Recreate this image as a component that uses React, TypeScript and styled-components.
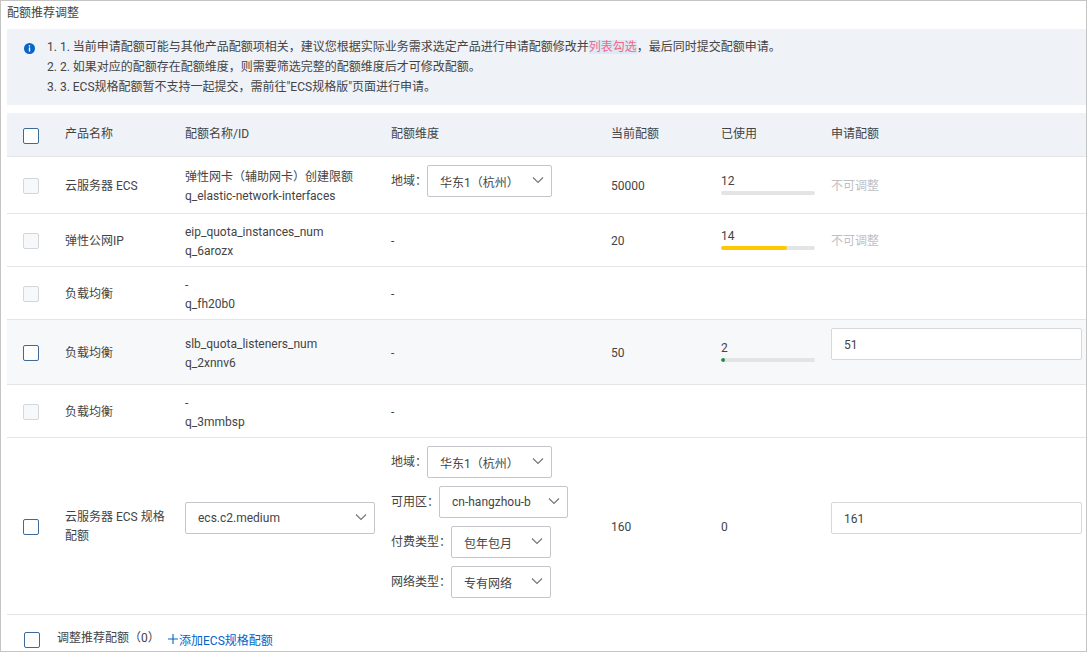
import React from "react";
import styled, { createGlobalStyle } from "styled-components";

const GlobalStyle = createGlobalStyle`
  html, body {
    margin: 0;
    padding: 0;
    background: #fff;
  }
  body {
    font-family: Roboto, "Noto Sans CJK SC", sans-serif;
    font-size: 12px;
    color: #444;
  }
`;

const Frame = styled.div`
  box-sizing: border-box;
  width: 1087px;
  height: 652px;
  border: 1px solid #c4c4c4;
  padding: 0 0 0 6px;
  overflow: hidden;
`;

const Title = styled.h2`
  margin: 0;
  height: 28px;
  line-height: 25px;
  font-size: 12px;
  font-weight: 400;
`;

const Notice = styled.div`
  display: flex;
  height: 76px;
  box-sizing: border-box;
  padding: 8px 0 0 17px;
  background: #eff2f7;
  gap: 12px;
`;

const InfoIcon = styled.svg`
  width: 11px;
  height: 11px;
  margin-top: 6px;
  flex: none;
`;

const NoticeList = styled.ol`
  margin: 0;
  padding: 0;
  list-style: none;
  line-height: 20px;
`;

const Highlight = styled.span`
  color: #f0678c;
  background: #dfe9f6;
`;

const Row = styled.div<{ $height: number; $head?: boolean; $hover?: boolean }>`
  display: grid;
  grid-template-columns: 58px 120px 206px 220px 110px 110px 1fr;
  align-items: center;
  box-sizing: border-box;
  height: ${(p) => p.$height}px;
  margin-top: ${(p) => (p.$head ? "8px" : "0")};
  border-bottom: 1px solid #e3e5e8;
  background: ${(p) => (p.$head ? "#eff2f7" : p.$hover ? "#f7f8fa" : "#fff")};
`;

const Check = styled.span<{ $disabled?: boolean }>`
  display: block;
  box-sizing: border-box;
  width: 16px;
  height: 16px;
  margin: 2px 0 0 16px;
  border-radius: 2px;
  border: 1px solid ${(p) => (p.$disabled ? "#d3d6da" : "#3f6a96")};
  background: ${(p) => (p.$disabled ? "#f7f8fa" : "#fff")};
`;

const HeadCell = styled.div`
  line-height: 19px;
`;

const Cell = styled.div`
  line-height: 19px;
  min-width: 0;
  padding-top: 2px;
`;

const ProductCell = styled(Cell)`
  padding-right: 16px;
`;

const NameCell = styled(Cell)`
  padding-top: 4px;
`;

const FormField = styled.div`
  margin-bottom: 16px;
`;

const DimList = styled.div`
  display: flex;
  flex-direction: column;
  gap: 8px;
  margin-bottom: 8px;
`;

const DimRow = styled.div`
  display: flex;
  align-items: center;
  white-space: nowrap;
`;

const DimLabel = styled.span`
  padding-bottom: 4px;
`;

const SelectBox = styled.div<{ $width: number }>`
  display: flex;
  align-items: center;
  justify-content: space-between;
  box-sizing: border-box;
  width: ${(p) => p.$width}px;
  height: 32px;
  padding: 0 7px 0 12px;
  background: #fff;
  border: 1px solid #c4c6cc;
  border-radius: 2px;
  white-space: nowrap;
`;

const Chevron = styled.svg`
  width: 12px;
  height: 8px;
  flex: none;
  margin-top: -3px;
`;

const UsedBlock = styled.div`
  margin-top: -1px;
`;

const UsedValue = styled.div`
  line-height: 15px;
  margin-bottom: 2px;
`;

const Track = styled.div`
  width: 94px;
  height: 4px;
  border-radius: 2px;
  background: #e3e4e6;
  overflow: hidden;
`;

const Fill = styled.div<{ $color: string }>`
  height: 100%;
  border-radius: 2px;
  background: ${(p) => p.$color};
`;

const Muted = styled.span`
  color: #bdbfc4;
  margin-top: -2px;
`;

const QuotaInput = styled.div`
  box-sizing: border-box;
  width: 251px;
  height: 32px;
  line-height: 32px;
  padding-left: 12px;
  margin-bottom: 16px;
  background: #fff;
  border: 1px solid #d6d8dc;
  border-radius: 2px;
`;

const Footer = styled.div`
  display: flex;
  align-items: center;
  height: 37px;
  padding: 11px 0 0 1px;
  box-sizing: border-box;
`;

const FooterLabel = styled.span`
  margin-left: 17px;
  margin-bottom: 5px;
  width: 111px;
  white-space: nowrap;
`;

const AddLink = styled.a`
  display: flex;
  align-items: center;
  color: #0064c8;
  gap: 1px;
`;

const PlusIcon = styled.svg`
  width: 10px;
  height: 10px;
`;

const ChevronIcon = () => (
  <Chevron viewBox="0 0 12 8">
    <path d="M1 1.5 L6 6.5 L11 1.5" fill="none" stroke="#777" strokeWidth="1.2" />
  </Chevron>
);

const Select = ({ width, value }: { width: number; value: string }) => (
  <SelectBox $width={width}>
    <span>{value}</span>
    <ChevronIcon />
  </SelectBox>
);

const Used = ({ value, percent, color }: { value: string; percent: number; color: string }) => (
  <UsedBlock>
    <UsedValue>{value}</UsedValue>
    <Track>
      <Fill $color={color} style={{ width: `${percent}%` }} />
    </Track>
  </UsedBlock>
);

const Name = ({ top, id }: { top: string; id: string }) => (
  <NameCell>
    {top}
    <br />
    {id}
  </NameCell>
);

export default function App() {
  return (
    <Frame>
      <GlobalStyle />
      <Title>配额推荐调整</Title>
      <Notice>
        <InfoIcon viewBox="0 0 11 11">
          <circle cx="5.5" cy="5.5" r="5.5" fill="#0a64c8" />
          <rect x="4.8" y="2.2" width="1.4" height="1.4" fill="#fff" />
          <rect x="4.8" y="4.4" width="1.4" height="4.2" fill="#fff" />
        </InfoIcon>
        <NoticeList>
          <li>
            1. 1. 当前申请配额可能与其他产品配额项相关，建议您根据实际业务需求选定产品进行申请配额修改并
            <Highlight>列表勾选</Highlight>，最后同时提交配额申请。
          </li>
          <li>2. 2. 如果对应的配额存在配额维度，则需要筛选完整的配额维度后才可修改配额。</li>
          <li>3. 3. ECS规格配额暂不支持一起提交，需前往"ECS规格版"页面进行申请。</li>
        </NoticeList>
      </Notice>

      <Row $head $height={44}>
        <Check />
        <HeadCell>产品名称</HeadCell>
        <HeadCell>配额名称/ID</HeadCell>
        <HeadCell>配额维度</HeadCell>
        <HeadCell>当前配额</HeadCell>
        <HeadCell>已使用</HeadCell>
        <HeadCell>申请配额</HeadCell>
      </Row>

      <Row $height={57}>
        <Check $disabled />
        <ProductCell>云服务器 ECS</ProductCell>
        <Name top="弹性网卡（辅助网卡）创建限额" id="q_elastic-network-interfaces" />
        <DimList>
          <DimRow>
            <DimLabel>地域：</DimLabel>
            <Select width={125} value="华东1（杭州）" />
          </DimRow>
        </DimList>
        <Cell>50000</Cell>
        <Used value="12" percent={0} color="#ffc800" />
        <Muted>不可调整</Muted>
      </Row>

      <Row $height={53}>
        <Check $disabled />
        <ProductCell>弹性公网IP</ProductCell>
        <Name top="eip_quota_instances_num" id="q_6arozx" />
        <Cell>-</Cell>
        <Cell>20</Cell>
        <Used value="14" percent={70} color="#ffc800" />
        <Muted>不可调整</Muted>
      </Row>

      <Row $height={53}>
        <Check $disabled />
        <ProductCell>负载均衡</ProductCell>
        <Name top="-" id="q_fh20b0" />
        <Cell>-</Cell>
      </Row>

      <Row $hover $height={65}>
        <Check />
        <ProductCell>负载均衡</ProductCell>
        <Name top="slb_quota_listeners_num" id="q_2xnnv6" />
        <Cell>-</Cell>
        <Cell>50</Cell>
        <Used value="2" percent={4} color="#1e8e3e" />
        <QuotaInput>51</QuotaInput>
      </Row>

      <Row $height={53}>
        <Check $disabled />
        <ProductCell>负载均衡</ProductCell>
        <Name top="-" id="q_3mmbsp" />
        <Cell>-</Cell>
      </Row>

      <Row $height={177}>
        <Check />
        <ProductCell>云服务器 ECS 规格配额</ProductCell>
        <FormField>
          <Select width={190} value="ecs.c2.medium" />
        </FormField>
        <DimList>
          <DimRow>
            <DimLabel>地域：</DimLabel>
            <Select width={125} value="华东1（杭州）" />
          </DimRow>
          <DimRow>
            <DimLabel>可用区：</DimLabel>
            <Select width={129} value="cn-hangzhou-b" />
          </DimRow>
          <DimRow>
            <DimLabel>付费类型：</DimLabel>
            <Select width={100} value="包年包月" />
          </DimRow>
          <DimRow>
            <DimLabel>网络类型：</DimLabel>
            <Select width={100} value="专有网络" />
          </DimRow>
        </DimList>
        <Cell>160</Cell>
        <Cell>0</Cell>
        <QuotaInput>161</QuotaInput>
      </Row>

      <Footer>
        <Check />
        <FooterLabel>调整推荐配额（0）</FooterLabel>
        <AddLink>
          <PlusIcon viewBox="0 0 10 10">
            <path d="M5 0 V10 M0 5 H10" stroke="#0064c8" strokeWidth="1.1" />
          </PlusIcon>
          添加ECS规格配额
        </AddLink>
      </Footer>
    </Frame>
  );
}
